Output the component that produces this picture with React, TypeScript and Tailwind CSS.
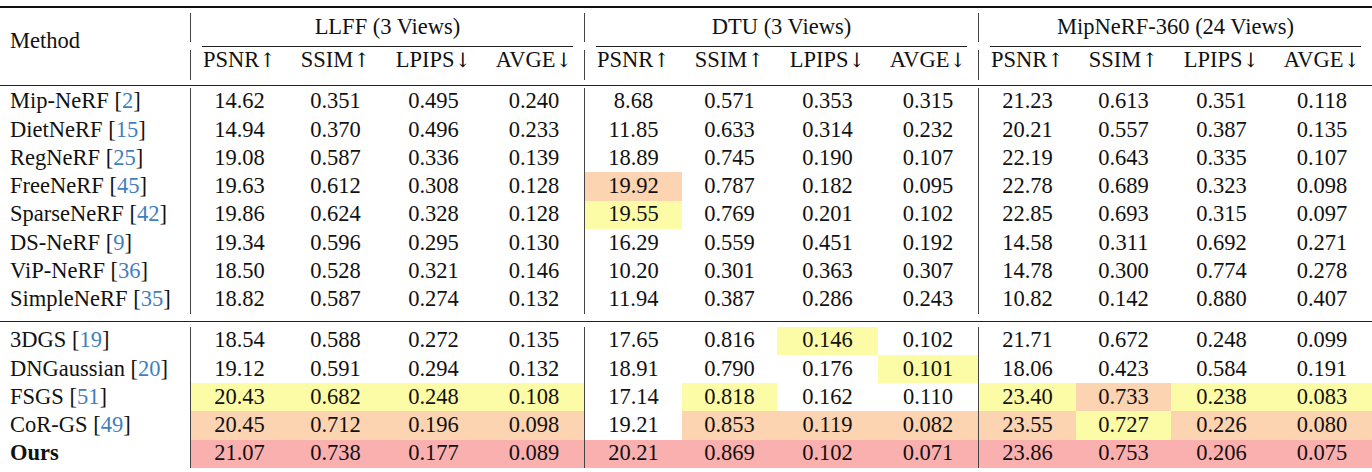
import React from 'react';

const colW = ['w-[97px]', 'w-[95px]', 'w-[101px]', 'w-[100px]'];
const hlCls: Record<string, string> = {
  '-': '',
  y: 'bg-[#fdfca6]',
  o: 'bg-[#fcd4b1]',
  r: 'bg-[#fbb0b0]',
};

type Row = { name: string; cite?: string; bold?: boolean; vals: string; hl: string };

const group1: Row[] = [
  { name: 'Mip-NeRF', cite: '2', vals: '14.62 0.351 0.495 0.240 8.68 0.571 0.353 0.315 21.23 0.613 0.351 0.118', hl: '------------' },
  { name: 'DietNeRF', cite: '15', vals: '14.94 0.370 0.496 0.233 11.85 0.633 0.314 0.232 20.21 0.557 0.387 0.135', hl: '------------' },
  { name: 'RegNeRF', cite: '25', vals: '19.08 0.587 0.336 0.139 18.89 0.745 0.190 0.107 22.19 0.643 0.335 0.107', hl: '------------' },
  { name: 'FreeNeRF', cite: '45', vals: '19.63 0.612 0.308 0.128 19.92 0.787 0.182 0.095 22.78 0.689 0.323 0.098', hl: '----o-------' },
  { name: 'SparseNeRF', cite: '42', vals: '19.86 0.624 0.328 0.128 19.55 0.769 0.201 0.102 22.85 0.693 0.315 0.097', hl: '----y-------' },
  { name: 'DS-NeRF', cite: '9', vals: '19.34 0.596 0.295 0.130 16.29 0.559 0.451 0.192 14.58 0.311 0.692 0.271', hl: '------------' },
  { name: 'ViP-NeRF', cite: '36', vals: '18.50 0.528 0.321 0.146 10.20 0.301 0.363 0.307 14.78 0.300 0.774 0.278', hl: '------------' },
  { name: 'SimpleNeRF', cite: '35', vals: '18.82 0.587 0.274 0.132 11.94 0.387 0.286 0.243 10.82 0.142 0.880 0.407', hl: '------------' },
];

const group2: Row[] = [
  { name: '3DGS', cite: '19', vals: '18.54 0.588 0.272 0.135 17.65 0.816 0.146 0.102 21.71 0.672 0.248 0.099', hl: '------y-----' },
  { name: 'DNGaussian', cite: '20', vals: '19.12 0.591 0.294 0.132 18.91 0.790 0.176 0.101 18.06 0.423 0.584 0.191', hl: '-------y----' },
  { name: 'FSGS', cite: '51', vals: '20.43 0.682 0.248 0.108 17.14 0.818 0.162 0.110 23.40 0.733 0.238 0.083', hl: 'yyyy-y--yoyy' },
  { name: 'CoR-GS', cite: '49', vals: '20.45 0.712 0.196 0.098 19.21 0.853 0.119 0.082 23.55 0.727 0.226 0.080', hl: 'oooo-ooooyoo' },
  { name: 'Ours', bold: true, vals: '21.07 0.738 0.177 0.089 20.21 0.869 0.102 0.071 23.86 0.753 0.206 0.075', hl: 'rrrrrrrrrrrr' },
];

const metrics: [string, string][] = [
  ['PSNR', '\u2191\uFE0E'],
  ['SSIM', '\u2191\uFE0E'],
  ['LPIPS', '\u2193\uFE0E'],
  ['AVGE', '\u2193\uFE0E'],
];

function HeaderBar() {
  return (
    <div className="w-px flex flex-col">
      <div className="h-[5px]" />
      <div className="h-[29px] bg-[#444]" />
      <div className="h-[8px]" />
      <div className="h-[30px] bg-[#444]" />
    </div>
  );
}

function HeaderGroup({ title }: { title: string }) {
  return (
    <div className="w-[393px] flex flex-col">
      <div className="h-[38px] flex items-center justify-center">{title}</div>
      <div className="h-px mx-[11px] bg-[#222]" />
      <div className="h-[26px] flex">
        {metrics.map(([m, a], i) => (
          <div key={m} className={`${colW[i]} flex items-center justify-center`}>
            {m}
            <span className="font-['DejaVu_Serif',serif] text-[#111] text-[20px]">{a}</span>
          </div>
        ))}
      </div>
    </div>
  );
}

function DataRow({ row }: { row: Row }) {
  const vals = row.vals.split(' ');
  const blocks = [0, 1, 2];
  return (
    <div className="flex h-[28.25px]">
      <div className={`w-[190px] flex items-center pl-[10px] ${row.bold ? 'font-bold' : ''}`}>
        <span>
          {row.name}
          {row.cite && (
            <>
              {' '}[<span className="text-[#3f7fbf]">{row.cite}</span>]
            </>
          )}
        </span>
      </div>
      {blocks.map((b) => (
        <React.Fragment key={b}>
          <div className="w-px bg-[#444]" />
          <div className="flex w-[393px]">
            {[0, 1, 2, 3].map((c) => {
              const idx = b * 4 + c;
              return (
                <div
                  key={c}
                  className={`${colW[c]} flex items-center justify-center ${hlCls[row.hl[idx]]}`}
                >
                  {vals[idx]}
                </div>
              );
            })}
          </div>
        </React.Fragment>
      ))}
    </div>
  );
}

export default function App() {
  return (
    <div className="w-[1372px] h-[472px] bg-white text-[#111] font-['Liberation_Serif','DejaVu_Serif',serif] text-[22.5px] leading-none overflow-hidden flex flex-col">
      <div className="h-[6px] shrink-0" />
      <div className="h-[2px] bg-[#111] shrink-0" />
      <div className="flex h-[77px] shrink-0">
        <div className="w-[190px] flex items-center pl-[10px] pb-[11px]">Method</div>
        <HeaderBar />
        <HeaderGroup title="LLFF (3 Views)" />
        <HeaderBar />
        <HeaderGroup title="DTU (3 Views)" />
        <HeaderBar />
        <HeaderGroup title="MipNeRF-360 (24 Views)" />
      </div>
      <div className="h-px bg-[#222] shrink-0" />
      <div className="h-[1.5px] shrink-0" />
      <div className="flex flex-col shrink-0">
        {group1.map((r) => (
          <DataRow key={r.name} row={r} />
        ))}
      </div>
      <div className="h-[7.5px] shrink-0" />
      <div className="h-px bg-[#222] shrink-0" />
      <div className="h-[4.5px] shrink-0" />
      <div className="flex flex-col shrink-0">
        {group2.map((r) => (
          <DataRow key={r.name} row={r} />
        ))}
      </div>
    </div>
  );
}
